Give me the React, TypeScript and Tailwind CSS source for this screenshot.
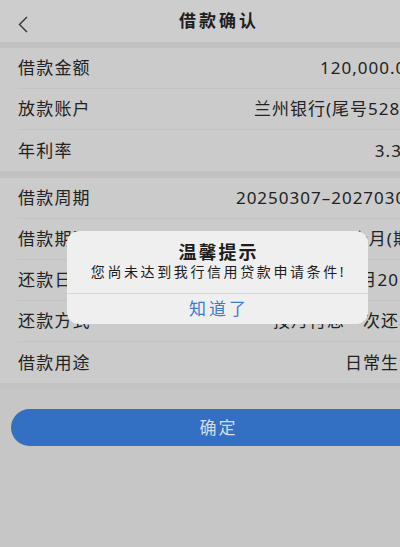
const font = { fontFamily: '"Noto Sans", "Noto Sans CJK SC", sans-serif' };

type Row = { label: string; value: string };

const section1: Row[] = [
  { label: "借款金额", value: "120,000.00" },
  { label: "放款账户", value: "兰州银行(尾号5288)" },
  { label: "年利率", value: "3.3%" },
];

const section2: Row[] = [
  { label: "借款周期", value: "20250307–20270307" },
  { label: "借款期限", value: "24个月(期)" },
  { label: "还款日", value: "每月20日" },
  { label: "还款方式", value: "按月付息一次还本" },
  { label: "借款用途", value: "日常生活" },
];

function Section({ rows }: { rows: Row[] }) {
  return (
    <div className="bg-[#cbcbcb] pl-[18px]">
      {rows.map((r, i) => (
        <div
          key={r.label}
          className={`flex h-[41px] items-center justify-between pr-[18px] ${
            i < rows.length - 1 ? "border-b border-[#c3c3c3]" : ""
          }`}
        >
          <span className="text-[17px] tracking-[1.2px] text-[#222]">{r.label}</span>
          <span className="whitespace-nowrap text-[17px] tracking-[1px] text-[#222]">{r.value}</span>
        </div>
      ))}
    </div>
  );
}

export default function App() {
  return (
    <div className="relative h-[547px] w-[400px] overflow-hidden bg-[#c6c6c6]" style={font}>
      <div className="w-[435px]">
        <header className="relative flex h-[42px] items-center justify-center bg-[#cdcdcd]">
          <svg className="absolute left-[17px] top-[16px]" width="12" height="17" viewBox="0 0 12 17">
            <path d="M10 1 L2.5 8.5 L10 16" fill="none" stroke="#333" strokeWidth="1.4" />
          </svg>
          <h1 className="pl-[3px] text-[17px] font-bold tracking-[3px] text-[#1e1e1e]">借款确认</h1>
        </header>
        <div className="h-[6px] bg-[#c1c1c1]" />
        <Section rows={section1} />
        <div className="h-[7px] bg-[#c1c1c1]" />
        <Section rows={section2} />
        <div className="h-[6px] bg-[#c3c3c3]" />
        <div className="px-[11px] pt-[20px]">
          <button className="flex h-[37px] w-full items-center justify-center rounded-full bg-[#3370c4] pl-[2px] text-[17px] tracking-[2px] text-[#d6dce6]">
            确定
          </button>
        </div>
      </div>

      <div className="absolute left-[67px] top-[231px] w-[301px] overflow-hidden rounded-[12px] bg-[#efefef]">
        <div className="flex flex-col items-center pb-[12px] pt-[10px]">
          <p className="pl-[2px] text-[18px] font-bold leading-[22px] tracking-[2px] text-[#1c1c1c]">温馨提示</p>
          <p className="pl-[2px] text-[14px] leading-[18px] tracking-[2.6px] text-[#1c1c1c]">您尚未达到我行信用贷款申请条件!</p>
        </div>
        <div className="flex h-[31px] items-center justify-center border-t border-[#d8d8d8]">
          <span className="pl-[3px] text-[17px] tracking-[3px] text-[#3b7ad0]">知道了</span>
        </div>
      </div>
    </div>
  );
}
